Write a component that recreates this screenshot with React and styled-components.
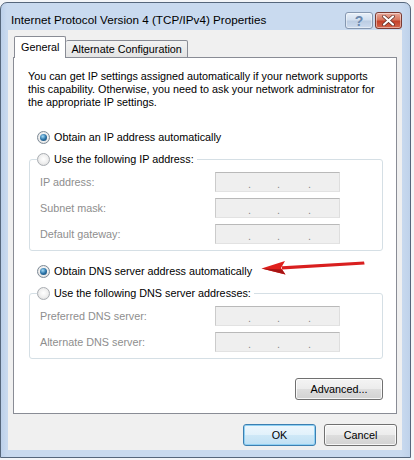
import React from "react";
import styled, { createGlobalStyle } from "styled-components";

const GlobalStyle = createGlobalStyle`
  html, body {
    margin: 0;
    padding: 0;
    background: #f3f5f8;
  }
  body {
    font-family: "Liberation Sans", Arial, sans-serif;
    font-size: 10.8px;
    color: #000;
  }
`;

const Window = styled.div`
  box-sizing: border-box;
  width: 411px;
  height: 456px;
  margin-top: 2px;
  border: 1px solid #56677c;
  border-radius: 7px 7px 0 0;
  background: linear-gradient(90deg, #bcd0ea 0, #c9daef 6px, #c9daef 400px, #bfd2ea 100%);
  padding: 0 8px 7px 7px;
  display: flex;
  flex-direction: column;
`;

const TitleBar = styled.div`
  height: 27px;
  display: flex;
  align-items: flex-start;
  justify-content: space-between;
  padding-left: 3px;
`;

const Title = styled.div`
  padding-top: 9px;
  font-size: 11.7px;
  line-height: 16px;
  color: #000;
`;

const TitleButtons = styled.div`
  display: flex;
  gap: 2px;
  padding-top: 9px;
`;

const CaptionButton = styled.div`
  box-sizing: border-box;
  width: ${(p) => p.$width}px;
  height: 17px;
  border-radius: 3px;
  border: 1px solid ${(p) => (p.$close ? "#7a3a32" : "#8597b0")};
  background: ${(p) =>
    p.$close
      ? "linear-gradient(#e9a99b 0%, #d7775f 45%, #c4412a 55%, #d4664d 100%)"
      : "linear-gradient(#e8f0f9 0%, #d3e0f0 45%, #bccde3 55%, #cddbee 100%)"};
  box-shadow: inset 0 0 0 1px rgba(255, 255, 255, 0.45);
  display: flex;
  align-items: center;
  justify-content: center;
  color: #6a88ad;
  font-size: 14px;
  font-weight: bold;
`;

const Client = styled.div`
  flex: 1;
  background: #f0f0f0;
  display: flex;
  flex-direction: column;
  padding: 6px 5px 0 5px;
`;

const TabRow = styled.div`
  display: flex;
  align-items: flex-end;
  padding-left: 1px;
  margin-bottom: -1px;
  position: relative;
  z-index: 1;
`;

const Tab = styled.div`
  box-sizing: border-box;
  height: ${(p) => (p.$active ? 22 : 18)}px;
  padding: 0 ${(p) => (p.$active ? 6 : 5)}px;
  border: 1px solid #898c95;
  border-bottom: ${(p) => (p.$active ? "none" : "1px solid #898c95")};
  border-left: ${(p) => (p.$active ? "1px solid #898c95" : "none")};
  border-radius: 2px 2px 0 0;
  background: ${(p) => (p.$active ? "#fff" : "linear-gradient(#f2f2f2, #e4e4e4)")};
  display: flex;
  align-items: center;
  padding-bottom: ${(p) => (p.$active ? 2 : 0)}px;
`;

const Panel = styled.div`
  position: relative;
  box-sizing: border-box;
  height: 357px;
  background: #fff;
  border: 1px solid #898c95;
  padding: 12px 13px 0 14px;
`;

const Description = styled.p`
  margin: 0;
  line-height: 13px;
`;

const RadioRow = styled.label`
  display: flex;
  align-items: center;
  gap: 4px;
  height: 16px;
  margin-top: ${(p) => p.$top || 0}px;
  padding-left: ${(p) => p.$indent || 0}px;
`;

const RadioCircle = styled.span`
  box-sizing: border-box;
  width: 13px;
  height: 13px;
  border-radius: 50%;
  border: 1px solid ${(p) => (p.$checked ? "#7d8a96" : "#a9adb2")};
  background: radial-gradient(circle at 50% 45%, #ffffff 0, #eeeeee 55%, #d2d2d2 100%);
  display: flex;
  align-items: center;
  justify-content: center;
  flex: none;

  &::after {
    content: "";
    display: ${(p) => (p.$checked ? "block" : "none")};
    width: 7px;
    height: 7px;
    border-radius: 50%;
    background: radial-gradient(circle at 40% 35%, #a4dcf8 0, #2c74a8 50%, #133f63 100%);
  }
`;

const Group = styled.fieldset`
  margin: 6px 0 0 1px;
  border: 1px solid #d5dfe5;
  border-radius: 3px;
  padding: 0 10px 6px 10px;
`;

const Legend = styled.legend`
  margin-left: -3px;
  padding: 0 3px 0 0;
`;

const Fields = styled.div`
  display: flex;
  flex-direction: column;
  gap: 6px;
  padding-top: 5px;
`;

const FieldRow = styled.div`
  display: grid;
  grid-template-columns: 175px 125px;
  align-items: center;
  height: 20px;
`;

const FieldLabel = styled.span`
  color: #8e8e8e;
`;

const IpBox = styled.div`
  box-sizing: border-box;
  height: 20px;
  background: #efefef;
  border: 1px solid;
  border-color: #b9b9b9 #dedede #e2e2e2 #cbcbcb;
  display: grid;
  grid-template-columns: 35px 29px 31px 1fr;
  color: #8a8a8a;
  line-height: 18px;
`;

const Dot = styled.span`
  text-align: right;
  padding-top: 2px;
`;

const ButtonRow = styled.div`
  display: flex;
  justify-content: flex-end;
  gap: 8px;
  margin-top: ${(p) => p.$top || 0}px;
  padding-right: ${(p) => p.$right || 0}px;
`;

const Button = styled.button`
  box-sizing: border-box;
  width: ${(p) => p.$width || 73}px;
  height: 22px;
  padding: 0;
  font: inherit;
  color: #000;
  border-radius: 3px;
  border: 1px solid ${(p) => (p.$default ? "#3c7fb1" : "#707070")};
  background: ${(p) =>
    p.$default
      ? "linear-gradient(#eef7fd 0%, #e1f1fb 50%, #cfe8f7 50%, #bfe0f4 100%)"
      : "linear-gradient(#f4f4f4 0%, #ececec 50%, #dedede 50%, #d2d2d2 100%)"};
  box-shadow: inset 0 0 0 1px ${(p) => (p.$default ? "#8fd0f3" : "rgba(255,255,255,0.8)")};
`;

const ArrowSvg = styled.svg`
  position: absolute;
  left: 246px;
  top: 200px;
`;

function Radio({ checked, children, ...rest }) {
  return (
    <RadioRow {...rest}>
      <RadioCircle $checked={checked} />
      <span>{children}</span>
    </RadioRow>
  );
}

function IpField({ label }) {
  return (
    <FieldRow>
      <FieldLabel>{label}</FieldLabel>
      <IpBox>
        <Dot>.</Dot>
        <Dot>.</Dot>
        <Dot>.</Dot>
        <span />
      </IpBox>
    </FieldRow>
  );
}

function Arrow() {
  return (
    <ArrowSvg width="108" height="18" viewBox="0 0 108 18">
      <path d="M22 8.2 L104 3.6 L104.6 6.4 L22 11.6 Z" fill="#d91f1f" />
      <path d="M1.5 10.5 L25 3 L21 10 L25.5 16.5 Z" fill="#e0201c" />
      <path d="M1.5 10.5 L25.5 16.5 L22 11.5 Z" fill="#a81414" />
    </ArrowSvg>
  );
}

export default function App() {
  return (
    <>
      <GlobalStyle />
      <Window>
        <TitleBar>
          <Title>Internet Protocol Version 4 (TCP/IPv4) Properties</Title>
          <TitleButtons>
            <CaptionButton $width={28}>?</CaptionButton>
            <CaptionButton $width={27} $close>
              <svg width="13" height="11" viewBox="0 0 13 11">
                <path d="M2 1.5 L11 9.5 M11 1.5 L2 9.5" stroke="#5a2a24" strokeWidth="3.6" strokeLinecap="round" />
                <path d="M2 1.5 L11 9.5 M11 1.5 L2 9.5" stroke="#fff" strokeWidth="2.2" strokeLinecap="round" />
              </svg>
            </CaptionButton>
          </TitleButtons>
        </TitleBar>
        <Client>
          <TabRow>
            <Tab $active>General</Tab>
            <Tab>Alternate Configuration</Tab>
          </TabRow>
          <Panel>
            <Description>
              You can get IP settings assigned automatically if your network supports
              this capability. Otherwise, you need to ask your network administrator
              for the appropriate IP settings.
            </Description>

            <Radio checked $top={20} $indent={9}>
              Obtain an IP address automatically
            </Radio>
            <Group>
              <Legend>
                <Radio>Use the following IP address:</Radio>
              </Legend>
              <Fields>
                <IpField label="IP address:" />
                <IpField label="Subnet mask:" />
                <IpField label="Default gateway:" />
              </Fields>
            </Group>

            <Radio checked $top={12} $indent={9}>
              Obtain DNS server address automatically
            </Radio>
            <Group>
              <Legend>
                <Radio>Use the following DNS server addresses:</Radio>
              </Legend>
              <Fields>
                <IpField label="Preferred DNS server:" />
                <IpField label="Alternate DNS server:" />
              </Fields>
            </Group>

            <ButtonRow $top={19}>
              <Button $width={88}>Advanced...</Button>
            </ButtonRow>

            <Arrow />
          </Panel>
          <ButtonRow $top={10}>
            <Button $default>OK</Button>
            <Button>Cancel</Button>
          </ButtonRow>
        </Client>
      </Window>
    </>
  );
}
